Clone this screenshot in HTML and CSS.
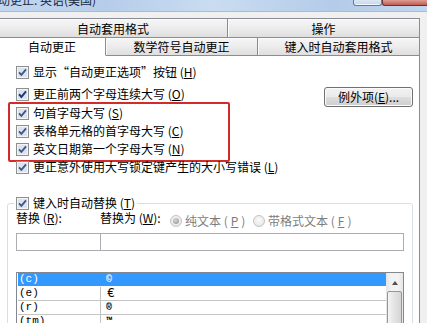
FILE: index.html
```html
<!DOCTYPE html>
<html lang="zh-CN">
<head>
<meta charset="utf-8">
<title>自动更正</title>
<link rel="stylesheet" href="styles.css">
</head>
<body>
<div class="titlebar">
  <span class="title">自动更正: 英语(美国)</span>
  <div class="caps"><span class="cap-max"></span><span class="cap-close"></span></div>
</div>
<div class="tabctl">
  <div class="tabrow row1">
    <div class="tab tab-a">自动套用格式</div>
    <div class="tab tab-b">操作</div>
  </div>
  <div class="tabrow row2">
    <div class="tab tab-sel">自动更正</div>
    <div class="tab tab-c">数学符号自动更正</div>
    <div class="tab tab-d">键入时自动套用格式</div>
  </div>
  <div class="panel">
    <label class="opt r1"><svg class="cb" viewBox="0 0 13 13" width="13" height="13"><rect x=".5" y=".5" width="12" height="12" fill="#f4f4f4" stroke="#8e8f8f"/><rect x="2" y="2" width="9" height="9" fill="#dce3eb"/><path d="M3 6.3l2.4 2.6L10 3.4" fill="none" stroke="#3b5590" stroke-width="1.8"/></svg><span>显示“自动更正选项”按钮 (<u>H</u>)</span></label>
    <div class="r2">
      <label class="opt"><svg class="cb" viewBox="0 0 13 13" width="13" height="13"><rect x=".5" y=".5" width="12" height="12" fill="#f4f4f4" stroke="#8e8f8f"/><rect x="2" y="2" width="9" height="9" fill="#dce3eb"/><path d="M3 6.3l2.4 2.6L10 3.4" fill="none" stroke="#1f3a78" stroke-width="2"/></svg><span>更正前两个字母连续大写 (<u>O</u>)</span></label>
      <button class="btn" type="button">例外项(<u>E</u>)...</button>
    </div>
    <div class="highlight">
      <label class="opt"><svg class="cb" viewBox="0 0 13 13" width="13" height="13"><rect x=".5" y=".5" width="12" height="12" fill="#f4f4f4" stroke="#8e8f8f"/><rect x="2" y="2" width="9" height="9" fill="#dce3eb"/><path d="M3 6.3l2.4 2.6L10 3.4" fill="none" stroke="#3b5590" stroke-width="1.8"/></svg><span>句首字母大写 (<u>S</u>)</span></label>
      <label class="opt"><svg class="cb" viewBox="0 0 13 13" width="13" height="13"><rect x=".5" y=".5" width="12" height="12" fill="#f4f4f4" stroke="#8e8f8f"/><rect x="2" y="2" width="9" height="9" fill="#dce3eb"/><path d="M3 6.3l2.4 2.6L10 3.4" fill="none" stroke="#3b5590" stroke-width="1.8"/></svg><span>表格单元格的首字母大写 (<u>C</u>)</span></label>
      <label class="opt"><svg class="cb" viewBox="0 0 13 13" width="13" height="13"><rect x=".5" y=".5" width="12" height="12" fill="#f4f4f4" stroke="#8e8f8f"/><rect x="2" y="2" width="9" height="9" fill="#dce3eb"/><path d="M3 6.3l2.4 2.6L10 3.4" fill="none" stroke="#3b5590" stroke-width="1.8"/></svg><span>英文日期第一个字母大写 (<u>N</u>)</span></label>
    </div>
    <label class="opt r6"><svg class="cb" viewBox="0 0 13 13" width="13" height="13"><rect x=".5" y=".5" width="12" height="12" fill="#f4f4f4" stroke="#8e8f8f"/><rect x="2" y="2" width="9" height="9" fill="#dce3eb"/><path d="M3 6.3l2.4 2.6L10 3.4" fill="none" stroke="#3b5590" stroke-width="1.8"/></svg><span>更正意外使用大写锁定键产生的大小写错误 (<u>L</u>)</span></label>
    <fieldset class="group">
      <legend><span class="opt leg"><svg class="cb" viewBox="0 0 13 13" width="13" height="13"><rect x=".5" y=".5" width="12" height="12" fill="#f4f4f4" stroke="#8e8f8f"/><rect x="2" y="2" width="9" height="9" fill="#dce3eb"/><path d="M3 6.3l2.4 2.6L10 3.4" fill="none" stroke="#3b5590" stroke-width="1.8"/></svg><span>键入时自动替换 (<u>T</u>)</span></span></legend>
      <div class="labels">
        <span class="lbl-k">替换 (<u>R</u>):</span>
        <span class="lbl-v">替换为 (<u>W</u>):</span>
        <span class="radio on"><i></i>纯文本 (<u>P</u>)</span>
        <span class="radio"><i></i>带格式文本 (<u>F</u>)</span>
      </div>
      <div class="inputs"><div class="in in-k"></div><div class="in in-v"></div></div>
      <div class="list">
        <div class="rows">
          <div class="row sel"><span class="k">(c)</span><span class="v">©</span></div>
          <div class="row"><span class="k">(e)</span><span class="v euro">€</span></div>
          <div class="row"><span class="k">(r)</span><span class="v">®</span></div>
          <div class="row"><span class="k">(tm)</span><span class="v">™</span></div>
          <div class="row"><span class="k">...</span><span class="v">…</span></div>
        </div>
        <div class="vscroll"><span class="arrow-up"></span><span class="thumb"></span></div>
      </div>
    </fieldset>
  </div>
</div>
</body>
</html>
```

FILE: styles.css
```css
* { box-sizing: border-box; }
html, body { margin: 0; padding: 0; }
body {
  width: 427px;
  height: 323px;
  overflow: hidden;
  background: #f0f0f0;
  font-family: "Noto Sans CJK SC", "Noto Sans", sans-serif;
  font-size: 12px;
  color: #000;
}
u { text-decoration: underline; text-underline-offset: 1px; }

/* title bar */
.titlebar {
  height: 12px;
  display: flex;
  justify-content: space-between;
  align-items: flex-start;
  overflow: hidden;
  background: linear-gradient(90deg, #c2d7ef 0%, #b6cdea 25%, #c9dcf1 50%, #b4cce9 78%, #c0d5ee 100%);
  border-bottom: 1px solid #a7bbd3;
}
.title {
  margin: -9px 0 0 -14px;
  line-height: 18px;
  font-size: 12px;
  color: #1a2a40;
  white-space: nowrap;
}
.caps { display: flex; align-items: flex-start; }
.cap-max {
  width: 29px;
  height: 6px;
  border: 1px solid #667a95;
  border-top: none;
  border-radius: 0 0 3px 3px;
  background: linear-gradient(#d9e6f5, #c6d8ee);
  box-shadow: inset 0 -1px 0 #f4f8fc;
}
.cap-close {
  width: 45px;
  height: 6px;
  border: 1px solid #6f3030;
  border-top: none;
  border-right: none;
  border-radius: 0 0 0 3px;
  background: linear-gradient(#dc9e94, #c65a4e);
}

/* tab control */
.tabctl { margin: 6px 0 0 -2px; width: 422px; }
.tabrow { display: flex; }
.tab {
  text-align: center;
  white-space: nowrap;
  border: 1px solid #898c95;
  border-left: none;
  background: linear-gradient(#f6f6f6, #ececec 50%, #dfdfdf);
  box-shadow: inset 1px 1px 0 #fbfbfb;
}
.row1 .tab { height: 19px; border-bottom: none; padding-top: 1px; line-height: 17px; }
.tab-a { width: 230px; border-left: 1px solid #898c95; }
.tab-b { width: 192px; }
.row2 { margin-bottom: -1px; }
.row2 .tab { height: 19px; line-height: 17px; }
.tab-sel {
  width: 108px;
  border-left: 1px solid #898c95;
  background: #fff;
  box-shadow: none;
  border-bottom-color: #fff;
  position: relative;
  z-index: 1;
}
.tab-c { width: 152px; }
.tab-d { width: 162px; }

.panel {
  background: #fff;
  border: 1px solid #898c95;
  padding: 7px 6px 0 17px;
  height: 290px;
}

/* options */
.opt {
  display: flex;
  align-items: center;
  gap: 4px;
  height: 18px;
  line-height: 18px;
  white-space: nowrap;
}
.cb { flex: none; display: block; }
.r1 { margin-bottom: 4px; }
.r2 { display: flex; justify-content: space-between; align-items: flex-start; }
.btn {
  font: inherit;
  font-size: 12px;
  color: #000;
  margin: 2px 0 -4px;
  padding: 0;
  width: 89px;
  height: 20px;
  line-height: 18px;
  border: 1px solid #707070;
  border-radius: 3px;
  background: linear-gradient(#f2f2f2 0%, #ebebeb 48%, #dddddd 52%, #cfcfcf 100%);
  box-shadow: inset 0 0 0 1px #fbfbfb;
}
.highlight {
  margin: -1px 0 0 -8px;
  width: 222px;
  border: 2px solid #d32a2a;
  border-radius: 2px;
  padding: 0 0 2px 6px;
}
.r6 { margin-top: -4px; }

/* group box */
.group {
  margin: 19px 0 0 -9px;
  padding: 0 8px;
  border: 1px solid #d5dfe5;
  border-radius: 3px;
  min-width: 0;
}
.group legend { padding: 0 2px; margin-left: -2px; }
.opt.leg { height: 16px; line-height: 16px; }
.labels {
  display: flex;
  align-items: flex-start;
  height: 17px;
  line-height: 14px;
  white-space: nowrap;
}
.lbl-k { width: 84px; }
.lbl-v { width: 70px; }
.radio {
  display: flex;
  align-items: center;
  gap: 3px;
  margin-top: 3px;
  color: #7d7d7d;
}
.radio.on { width: 83px; }
.radio i {
  flex: none;
  width: 12px;
  height: 12px;
  border-radius: 50%;
  border: 1px solid #c3c3c3;
  background: radial-gradient(circle at 50% 40%, #fbfbfb, #e2e2e2);
  display: flex;
  align-items: center;
  justify-content: center;
}
.radio.on i::after {
  content: "";
  width: 6px;
  height: 6px;
  border-radius: 50%;
  background: radial-gradient(circle at 40% 35%, #d6d6d6, #8e8e8e);
}
.inputs { display: flex; margin-top: 5px; height: 18px; }
.in { border: 1px solid #abadb3; background: #fff; }
.in-k { width: 85px; }
.in-v { flex: 1; border-left: none; }

/* list */
.list {
  margin-top: 21px;
  display: flex;
  border: 1px solid #828790;
  height: 80px;
  background: #fff;
}
.rows { flex: 1; padding-left: 1px; }
.row {
  display: flex;
  height: 14px;
  border-bottom: 1px solid #c4c4c4;
  line-height: 13px;
  font-family: "Liberation Mono", monospace;
  font-size: 11px;
}
.k { width: 83px; border-right: 1px solid #c4c4c4; padding-left: 1px; }
.v { padding-left: 5px; font-weight: bold; font-size: 10px; }
.v.euro { font-weight: normal; font-size: 13px; padding-left: 6px; }
.row.sel { background: #3399ff; color: #fff; border-bottom-color: #fff; }
.row.sel .k { border-right-color: #3399ff; }
.vscroll {
  width: 17px;
  flex: none;
  display: flex;
  flex-direction: column;
  align-items: center;
  background: linear-gradient(90deg, #e4e4e4, #f2f2f2 30%, #f2f2f2 70%, #e6e6e6);
}
.arrow-up {
  margin-top: 8px;
  width: 0;
  height: 0;
  border-left: 3px solid transparent;
  border-right: 3px solid transparent;
  border-bottom: 4px solid #4f4f4f;
}
.thumb {
  margin-top: 6px;
  width: 15px;
  height: 40px;
  border: 1px solid #979797;
  border-radius: 2px;
  background: linear-gradient(90deg, #f4f4f4, #e3e3e3 50%, #d5d5d5);
}
```
